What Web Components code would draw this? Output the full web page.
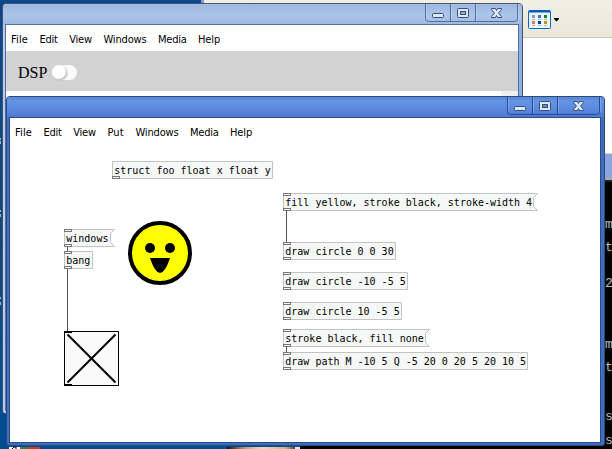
<!DOCTYPE html>
<html lang="en"><head><meta charset="utf-8"><title>Patch editor</title>
<style>html,body{margin:0;width:612px;height:449px;overflow:hidden}</style></head><body>
<desk-top></desk-top>
<script>
const define=(name,make)=>customElements.define(name,class extends HTMLElement{
  constructor(){super();this.attachShadow({mode:'open'});}
  connectedCallback(){this.shadowRoot.innerHTML=make(this);if(this.hasAttribute('fit')){
    const s=this.shadowRoot.querySelector('span'),w=+this.getAttribute('fit'),n=this.textContent.length;
    const got=s.getBoundingClientRect().width;s.style.letterSpacing=((w-got)/n)+'px';}}
});
define('fit-text',()=>`<style>:host{display:block;white-space:pre}span{display:inline-block}</style><span><slot></slot></span>`);

define('menu-bar',e=>{
  const w={File:17,Edit:18.2,View:22.7,Put:16.5,Windows:43.2,Media:28.5,Help:22};
  return `<style>:host{display:flex;gap:11.5px;height:26px;padding-left:5px;align-items:center;background:#fff;color:#000;font:11px/26px "DejaVu Sans Condensed","DejaVu Sans",sans-serif;box-sizing:border-box;padding-top:3px}
  fit-text{flex:none}</style>`+e.getAttribute('items').split(' ').map(t=>`<fit-text fit="${w[t]}" style="width:${w[t]}px">${t}</fit-text>`).join('');
});

define('title-buttons',()=>`<style>:host{display:block;width:94px;height:18px}svg{display:block}</style>
<svg width="94" height="18" fill="none"><path d="M.5 0V14.5Q.5 17.5 3.5 17.5H89.5Q92.5 17.5 92.5 14.5V0M25.5 0V17M50.5 0V17" stroke="var(--line)"/>
<path d="M1.5 0V14M26.5 0V16M51.5 0V16M93.5 0V15" stroke="#fff" opacity=".2"/>
<rect x="7.5" y="9.5" width="11" height="4" rx="1" fill="#dce8f8" stroke="#3b4f72"/>
<rect x="32.5" y="4.500" width="11" height="9" rx="1" fill="#dce8f8" stroke="#3b4f72"/><rect x="35.500" y="7.500" width="5" height="3" fill="var(--mid)" stroke="#3b4f72"/>
<path d="M66.500 4.500H70.500L71.500 6.500L72.500 4.500H76.500V5.500L73.500 9L76.500 12.500V13.500H72.500L71.500 11.500L70.500 13.500H66.500V12.500L69.500 9L66.500 5.500Z" fill="#dce8f8" stroke="#3b4f72"/></svg>`);

define('app-window',e=>`<style>:host{box-sizing:border-box;display:flex;flex-direction:column;border:1px solid var(--edge);border-radius:4px 4px 3px 3px;padding:0 4px 3px 3px;background:var(--frame);overflow:hidden}
header{height:20px;flex:none;margin:0 -4px 0 -3px;background:var(--bar);display:flex;justify-content:flex-end;padding:0 3px 0 0;border-top:1px solid var(--shine)}
main{flex:1;background:#fff;min-height:0;box-shadow:0 0 0 1px var(--line)}title-buttons{margin-top:-1px}</style>
<header><title-buttons></title-buttons></header><main><slot></slot></main>`);

define('dsp-panel',()=>`<style>:host{display:flex;height:40px;background:#d2d2d2;align-items:center;padding-left:12px;box-sizing:border-box;gap:4px;color:#000;font:16px "Liberation Serif",serif}
fit-text{width:30px;position:relative;top:2px}i{width:25px;height:15px;border-radius:8px;background:#fafafa;margin-top:2px}i:before{content:"";display:block;width:14px;height:14px;border-radius:50%;background:#fff;box-shadow:1px 1px 2px #aaa}</style>
<fit-text fit="29.500">DSP</fit-text><i></i>`);

define('patch-node',e=>{
  const w=+e.getAttribute('w'),m=e.hasAttribute('message'),top=!e.hasAttribute('source');
  const shape=m?`M.5 .5H${w-.5}L${w-4.5} 4.500V13.500L${w-.5} 17.500H.5Z`:`M.5 .5H${w-.5}V17.500H.5Z`;
  return `<style>:host{position:absolute;width:${w}px;height:18px;display:block}svg{position:absolute;inset:0;overflow:visible}
  fit-text{position:relative;padding-left:2.300px;color:#000;font:10px/19px "DejaVu Sans Mono",monospace}</style>
  <svg width="${w}" height="18"><path d="${shape}" fill="#f6f8f7" stroke="#c2c4c3"/>${top?'<rect x=".5" y=".5" width="7" height="2" fill="#f8f8f8" stroke="#777"/>':''}<rect x=".5" y="15.500" width="7" height="2" fill="#f8f8f8" stroke="#777"/></svg>
  <fit-text fit="${e.textContent.length*6.02}">${e.textContent}</fit-text>`;
});

define('patch-canvas',()=>{
  const n=(x,y,w,t,a='')=>`<patch-node style="left:${x}px;top:${y}px" w="${w}" ${a}>${t}</patch-node>`;
  return `<style>:host{display:block;position:relative;height:298px}.art{position:absolute;inset:0}</style>
  <svg class="art" width="590" height="298" viewBox="10 144 590 298" fill="none">
  <path d="M67.500 247V252M67.500 268V332M286.500 210V243M286.500 346V353" stroke="#555"/>
  <circle cx="160" cy="253" r="30" fill="#ff0" stroke="#000" stroke-width="4"/><circle cx="150" cy="248" r="5" fill="#000"/><circle cx="170" cy="248" r="5" fill="#000"/><path d="M150 258Q155 273 160 273Q165 273 170 258Z" fill="#000"/>
  <rect x="64.500" y="331.500" width="54" height="54" fill="#fafafa" stroke="#000"/><path d="M64 332.500H72M64 384.500H72" stroke="#000"/><path d="M67.500 334.500L115.500 382.500M115.500 334.500L67.500 382.500" stroke="#000" stroke-width="2"/></svg>`+
  n(102,17,161,'struct foo float x float y','source')+n(54,85,51,'windows','message')+n(54,107,29,'bang')+
  n(273,49,255,'fill yellow, stroke black, stroke-width 4','message')+n(273,98,113,'draw circle 0 0 30')+n(273,128,125,'draw circle -10 -5 5')+n(273,158,119,'draw circle 10 -5 5')+n(273,185,147,'stroke black, fill none','message')+n(273,208,245,'draw path M -10 5 Q -5 20 0 20 5 20 10 5');
});

define('calendar-icon',()=>{
  const c=['#8b9bad','#4473ad','#078a17','#ed7548','#073d91','#c99123'];
  return `<style>:host{display:block}svg{display:block}</style><svg width="36" height="19"><rect x=".5" y=".5" width="22" height="18" rx="1" fill="#eaf5ff" stroke="#0869c5"/><path d="M1 1.500H22" stroke="#0758b5" stroke-width="2"/>`+
  c.map((v,i)=>`<rect x="${4+i%3*6}" y="${5+(i/3|0)*6}" width="3" height="3" fill="${v}"/><path d="M${4+i%3*6} ${9.5+(i/3|0)*6}h3" stroke="#8b9dac" opacity=".65"/>`).join('')+`<path d="M26 8H31V9L28.500 11.500L26 9Z" fill="#000"/></svg>`;
});

define('console-strip',()=>`<style>:host{display:block;background:#000;color:#bdbdbd;font:13px/16px "Liberation Mono",monospace;overflow:hidden}div{position:absolute;left:1px}</style>`+
  [['m',217],['t',240],['2',276],['m',337],['t',360],['s',409],['s',433]].map(([t,y])=>`<div style="top:${y-182}px">${t}</div>`).join(''));

define('desk-top',()=>`<style>:host{display:block;position:relative;width:612px;height:449px;overflow:hidden;background:linear-gradient(#0b488c,#124778 50%,#034c91 90%,#004d91)}
.a{position:absolute}.front{left:6px;top:96px;width:599px;height:350px;--edge:#26497f;--shine:#618ed2;--line:#254b91;--mid:#668cc4;--frame:#416dbb;--bar:linear-gradient(#5586d7,#6495e4 12%,#5b89df 55%,#4b77cb)}
.back{left:2px;top:3px;width:521px;height:411px;--edge:#44536b;--shine:#aac0e5;--line:#52709e;--mid:#8eadd7;--frame:linear-gradient(90deg,#b6cbed,#8fb0e2);--bar:linear-gradient(#9db8df,#acc5eb 50%,#9db7df)}
.tool{left:204px;top:0;right:0;height:37px;background:linear-gradient(#f1f0e5,#ebe8da);border-bottom:1px solid #c9c6b7}
.page{left:522px;top:38px;width:90px;height:115px;background:#fff}.blue{left:604px;top:153px;width:8px;height:27px;background:#8ba5df;border-top:1px solid #d5d3c7;border-bottom:2px solid #aaa;box-sizing:border-box}
.under{left:604px;top:180px;width:8px;height:2px;background:#222}console-strip{left:604px;top:182px;width:8px;height:267px}.bits{left:0;top:444px}</style>
<div class="a tool"></div><div class="a" style="left:201px;top:0;width:3px;height:4px;background:#8b94d4"></div><div class="a page"></div><calendar-icon class="a" style="left:528px;top:10px"></calendar-icon><div class="a blue"></div><div class="a under"></div><console-strip class="a"></console-strip>
<svg class="a bits" width="612" height="5"><defs><linearGradient id="p"><stop stop-color="#16100e"/><stop offset=".25" stop-color="#b99a82"/><stop offset=".5" stop-color="#ecdcbb"/><stop offset=".85" stop-color="#d3b27e"/><stop offset="1" stop-color="#493a2d"/></linearGradient></defs><path d="M9 3H20V5H9Z" fill="#fff"/><path d="M12 5l2-2h2v2" stroke="#000" fill="none"/><path d="M20 3H28V5H20Z" fill="#387e48"/><path d="M28 3H40V5H28Z" fill="#cd3726"/><path d="M227 3H296V5H227Z" fill="url(#p)"/><path d="M295 3H300V5H295Z" fill="#e8e8e8"/><path d="M300 0H612V5H300Z" fill="#000"/></svg>
<svg class="a" style="left:0;top:138px" width="2" height="182"><path d="M0 0h1v2H0zM0 3h1v3H0zM0 72h1v2H0zM0 76h1v3H0zM0 159h1v2H0zM0 164h1v3H0z" fill="#9db5cf"/></svg>
<app-window class="a back"><menu-bar items="File Edit View Windows Media Help"></menu-bar><dsp-panel></dsp-panel><div style="height:320px;background:linear-gradient(#f0f0f0,#f0f0f0) right/17px 100% no-repeat"></div></app-window>
<app-window class="a front"><menu-bar items="File Edit View Put Windows Media Help"></menu-bar><patch-canvas></patch-canvas></app-window>`);
</script></body></html>
